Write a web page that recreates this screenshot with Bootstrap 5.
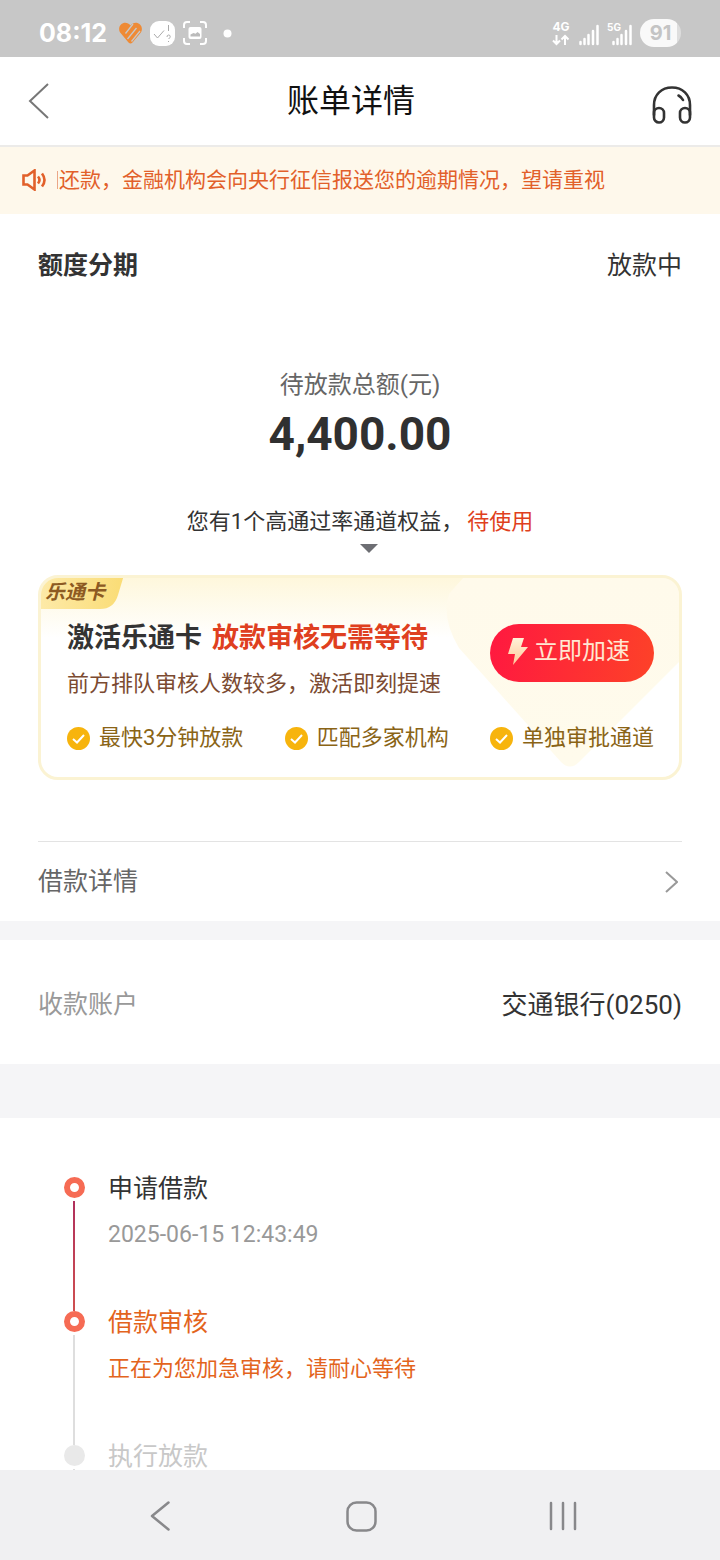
<!DOCTYPE html>
<html lang="zh-CN">
<head>
<meta charset="utf-8">
<meta name="viewport" content="width=device-width, initial-scale=1">
<title>账单详情</title>
<link href="https://cdn.jsdelivr.net/npm/bootstrap@5.3.0/dist/css/bootstrap.min.css" rel="stylesheet">
<style>
  body { font-family: Roboto, "Noto Sans CJK SC", sans-serif; color: #333; background: #fff; }
  svg { display: block; flex: none; }
  .gutter { padding-left: 38px; padding-right: 38px; }
  .status-bar { height: 57px; padding: 9px 39px 0; background: #c7c7c7; color: #fff; font-family: Inter, sans-serif; }
  .status-left { height: 48px; gap: 8px; }
  .status-right { height: 48px; gap: 8px; }
  .clock { font-size: 25px; font-weight: 700; line-height: 32px; margin-right: 4px; }
  .status-dot { margin-left: 8px; }
  .battery { width: 41px; height: 28px; border-radius: 14px; background: linear-gradient(90deg, #f9f9f9 91%, #dedede 91%); color: #c4c4c4; font-size: 20px; line-height: 28px; font-weight: 700; }
  .title-bar { height: 90px; padding: 0 28px; border-bottom: 2px solid #ecebe9; }
  .title-bar h1 { font-size: 32px; line-height: 40px; color: #111; }
  .notice { height: 67px; padding: 0 22px 2px; background: #fef8eb; color: #e2602a; font-size: 21px; gap: 10px; }
  .notice-text { border-left: 1px solid #eba787; line-height: 18px; padding-left: 1px; }
  .scroller { min-height: 0; scrollbar-width: none; }
  .t25 { font-size: 25px; line-height: 36px; }
  .t26 { font-size: 26px; line-height: 36px; }
  .t24 { font-size: 24px; line-height: 36px; }
  .t22 { font-size: 22px; line-height: 32px; }
  .quota { padding-top: 34px; }
  .quota h2 { font-weight: 700; }
  .total { margin-top: 83px; }
  .total-label { color: #666; }
  .amount { font-size: 46px; line-height: 56px; font-weight: 700; color: #303030; margin-top: 3px; }
  .perk { margin-top: 44px; color: #333; }
  .txt-red { color: #df3f20; }
  .caret { margin: 6px 0 0 18px; }
  .promo { margin-top: 22px; height: 205px; padding: 42px 25px 0 26px; border: 3px solid #fbf3d3; border-radius: 20px; background: linear-gradient(#fef7dc, #fff 60px); overflow: hidden; }
  .promo-tint { right: 0; top: 0; }
  .promo-tag { left: -3px; top: -3px; width: 87px; height: 34px; }
  .promo-tag span { position: relative; display: block; padding-left: 7px; font-size: 20px; line-height: 35px; font-weight: 700; font-style: italic; color: #8d5a22; }
  .promo h3 { font-size: 27px; line-height: 36px; font-weight: 700; margin: 0; gap: 10px; }
  .promo-sub { color: #7b4a31; margin-top: 12px; }
  .boost { width: 164px; height: 58px; margin-top: 4px; border: 0; border-radius: 29px; background: linear-gradient(100deg, #ff1840, #fd4228); color: #ffe7d2; font-size: 24px; line-height: 36px; gap: 6px; padding: 0 10px 4px 4px; }
  .feats { margin-top: 22px; color: #8a6416; }
  .feats li { gap: 9px; }
  .detail-row { margin-top: 61px; height: 80px; border-top: 1px solid #e3e3e3; color: #666; padding-right: 4px; }
  .band { background: #f5f5f7; }
  .band-s { height: 19px; }
  .band-l { height: 54px; }
  .account { height: 124px; padding-top: 5px; }
  .muted { color: #999; }
  .steps { padding: 52px 38px 0 63px; }
  .steps li { height: 134px; gap: 23px; }
  .step-text { padding-top: 1px; }
  .rail { width: 22px; padding-top: 7px; }
  .dot { width: 21px; height: 21px; border-radius: 50%; border: 6px solid #f66b54; background: #fff; flex: none; }
  .dot-off { border-color: #e9e9e9; background: #e9e9e9; }
  .wire { width: 2px; flex: 1; margin-top: 3px; margin-bottom: -7px; background: #dedede; }
  .wire-on { background: linear-gradient(#b0305c, #cf5050); }
  .step-note { margin-top: 12px; }
  .time { font-size: 23px; line-height: 32px; }
  .now { color: #e3641d; }
  .off { color: #c8c8c8; }
  .nav-sys { height: 90px; background: #f0f0f2; padding: 2px 142px 0; }
  .icon-btn { background: none; border: 0; padding: 0; }
</style>
</head>
<body>
<div class="d-flex flex-column vh-100 overflow-hidden">
  <div class="status-bar d-flex justify-content-between flex-shrink-0">
    <div class="status-left d-flex align-items-center">
      <span class="clock">08:12</span>
      <svg width="23" height="22" viewBox="0 0 23 22"><path d="M11.500 3.500C9 0 4.500 0 2 2.500-.500 5-.500 9 2 11.500l7.500 9q2 2 4 0l7.500-9c2.500-2.500 2.500-6.500 0-9C18.500 0 14 0 11.500 3.500z" fill="#ee8a35"/><path d="M13 2L5.500 11.500M16.500 6L7.500 17M20 9l-8.500 10.500" transform="translate(1 0)" stroke="#c7c7c7" stroke-width="1.300"/></svg>
      <svg width="25" height="25" viewBox="0 0 25 25"><rect width="25" height="25" rx="9" fill="#fff"/><path d="M4 13l3.500 4L14 9.500M18.500 4v6M17 16q0-2 1.600-2t1.600 1.600q0 1-1.600 2.400M18.500 20v1" fill="none" stroke="#aaa" stroke-width="1"/></svg>
      <svg width="24" height="24" viewBox="0 0 24 24"><path d="M1 7V4q0-3 3-3h3M17 1h3q3 0 3 3v3M23 17v3q0 3-3 3h-3M7 23H4q-3 0-3-3v-3" fill="none" stroke="#fff" stroke-width="2"/><rect x="5.500" y="6" width="13" height="12" rx="2" fill="#fff"/><path d="M7.500 15.500v-2l3-1.500 2 .800 2-1.800 2.500 2v2.500z" fill="#bbb"/></svg>
      <svg class="status-dot" width="9" height="9" viewBox="0 0 9 9"><circle cx="4.500" cy="4.500" r="4" fill="#fff"/></svg>
    </div>
    <div class="status-right d-flex align-items-center">
      <svg width="20" height="28" viewBox="0 0 20 28"><text x="10" y="12" text-anchor="middle" fill="#fff" font-size="12" font-weight="700">4G</text><path d="M5.500 16v9M2 21.500L5.500 25 9 21.500M14 26v-9M10.500 20.500L14 17l3.500 3.500" stroke="#fff" stroke-width="2" fill="none"/></svg>
      <svg width="20" height="28" viewBox="0 0 20 28"><path d="M1.500 23v2M5.500 20v5M9.500 16v9M14 12v13M18.500 7v18" stroke="#fff" stroke-width="2.500" stroke-linecap="round"/></svg>
      <svg width="25" height="28" viewBox="0 0 25 28"><text x="0" y="12" fill="#fff" font-size="10" font-weight="700">5G</text><path d="M6.500 23v2M10.500 20v5M14.500 16v9M19 12v13M23.500 7v18" stroke="#fff" stroke-width="2.500" stroke-linecap="round"/></svg>
      <span class="battery text-center">91</span>
    </div>
  </div>

  <header class="title-bar d-flex align-items-center justify-content-between flex-shrink-0">
    <button class="icon-btn" aria-label="返回"><svg width="22" height="36" viewBox="0 0 22 36"><path d="M20 1L2 18l18 17" fill="none" stroke="#777" stroke-width="2"/></svg></button>
    <h1 class="m-0 fw-normal">账单详情</h1>
    <button class="icon-btn pt-2" aria-label="客服"><svg width="40" height="38" viewBox="0 0 40 38"><g fill="none" stroke="#333" stroke-width="2.600" stroke-linecap="round"><path d="M2 29V19C2 8.500 9.500 1.500 20 1.500S38 8.500 38 19v10"/><rect x="2" y="22" width="10" height="14.500" rx="5"/><rect x="28" y="22" width="10" height="14.500" rx="5"/><path d="M26.500 9.500q3 1.500 4.500 4.500"/></g></svg></button>
  </header>

  <div class="notice d-flex align-items-center flex-shrink-0 text-nowrap">
    <svg width="25" height="22" viewBox="0 0 25 22"><g fill="none" stroke="#e2602a" stroke-width="2.600"><path d="M1.500 6.500h4L12.500 1.500v19L5.500 15.500h-4z"/><path d="M16 7.500q3 3.500 0 7M20 4.500q5 6.500 0 13"/></g></svg>
    <span class="notice-text">还款，金融机构会向央行征信报送您的逾期情况，望请重视</span>
  </div>

  <main class="scroller flex-grow-1 overflow-auto">
    <section class="quota gutter">
      <div class="d-flex justify-content-between">
        <h2 class="t25 m-0">额度分期</h2>
        <span class="t25">放款中</span>
      </div>
      <div class="total text-center">
        <div class="t24 total-label">待放款总额(元)</div>
        <div class="amount">4,400.00</div>
      </div>
      <div class="perk t22 d-flex justify-content-center">
        <span>您有1个高通过率通道权益，</span><a class="txt-red text-decoration-none ms-1" href="#perk">待使用</a>
      </div>
      <div class="d-flex justify-content-center"><svg class="caret" width="18" height="9" viewBox="0 0 18 9"><path d="M0 0h18L9 9z" fill="#6d6e73"/></svg></div>

      <div class="promo position-relative" id="perk">
        <svg class="promo-tint position-absolute" width="244" height="199" viewBox="0 0 244 199"><defs><linearGradient id="tint" x1="0" y1="0" x2="0" y2="1"><stop offset="0" stop-color="#fffaeb"/><stop offset="1" stop-color="#fffbec"/></linearGradient></defs><path d="M28 0L14 16Q6 40 24 70L126 184q9 9 18 0L244 84V0z" fill="url(#tint)"/></svg>
        <div class="promo-tag position-absolute"><svg class="position-absolute" width="87" height="34" viewBox="0 0 87 34"><defs><linearGradient id="tag" x1="0" y1="0" x2="1" y2="0"><stop offset="0" stop-color="#fdeaa9"/><stop offset="1" stop-color="#fadc75"/></linearGradient></defs><path d="M0 34V20Q0 0 20 0H86L80 20Q76 34 62 34z" fill="url(#tag)"/></svg><span>乐通卡</span></div>
        <div class="position-relative">
          <div class="d-flex justify-content-between">
            <div>
              <h3 class="d-flex"><span>激活乐通卡</span><span class="txt-red">放款审核无需等待</span></h3>
              <p class="promo-sub t22 mb-0">前方排队审核人数较多，激活即刻提速</p>
            </div>
            <button class="boost d-flex align-items-center justify-content-center"><svg width="20" height="27" viewBox="0 0 20 27"><defs><linearGradient id="bolt" x1="0" y1="0" x2="0" y2="1"><stop offset="0" stop-color="#fff3d8"/><stop offset="1" stop-color="#ffc79a"/></linearGradient></defs><path d="M5 0h11l-3 9h7L5 27l2-11H0z" fill="url(#bolt)"/></svg>立即加速</button>
          </div>
          <ul class="feats t22 list-unstyled d-flex justify-content-between mb-0">
            <li class="d-flex align-items-center"><svg width="23" height="23" viewBox="0 0 23 23"><circle cx="11.500" cy="11.500" r="11.500" fill="#f7b40d"/><path d="M6 12l4 3.500L17 8" fill="none" stroke="#fff" stroke-width="2"/></svg>最快3分钟放款</li>
            <li class="d-flex align-items-center"><svg width="23" height="23" viewBox="0 0 23 23"><circle cx="11.500" cy="11.500" r="11.500" fill="#f7b40d"/><path d="M6 12l4 3.500L17 8" fill="none" stroke="#fff" stroke-width="2"/></svg>匹配多家机构</li>
            <li class="d-flex align-items-center"><svg width="23" height="23" viewBox="0 0 23 23"><circle cx="11.500" cy="11.500" r="11.500" fill="#f7b40d"/><path d="M6 12l4 3.500L17 8" fill="none" stroke="#fff" stroke-width="2"/></svg>单独审批通道</li>
          </ul>
        </div>
      </div>

      <a class="detail-row t25 d-flex justify-content-between align-items-center text-decoration-none" href="#steps">借款详情<svg width="13" height="22" viewBox="0 0 13 22"><path d="M1 1l11 10L1 21" fill="none" stroke="#999" stroke-width="2"/></svg></a>
    </section>
    <div class="band band-s"></div>
    <section class="account gutter d-flex justify-content-between align-items-center">
      <span class="t25 muted">收款账户</span><span class="t26">交通银行(0250)</span>
    </section>
    <div class="band band-l"></div>
    <ol class="steps list-unstyled mb-0" id="steps">
      <li class="d-flex">
        <div class="rail d-flex flex-column align-items-center flex-shrink-0"><span class="dot"></span><span class="wire wire-on"></span></div>
        <div class="step-text"><div class="t25">申请借款</div><div class="time step-note muted">2025-06-15 12:43:49</div></div>
      </li>
      <li class="d-flex now">
        <div class="rail d-flex flex-column align-items-center flex-shrink-0"><span class="dot"></span><span class="wire"></span></div>
        <div class="step-text"><div class="t25">借款审核</div><div class="t22 step-note">正在为您加急审核，请耐心等待</div></div>
      </li>
      <li class="d-flex off">
        <div class="rail d-flex flex-column align-items-center flex-shrink-0"><span class="dot dot-off"></span><span class="wire"></span></div>
        <div class="step-text t25">执行放款</div>
      </li>
    </ol>
  </main>

  <nav class="nav-sys d-flex align-items-center justify-content-between flex-shrink-0" aria-label="系统导航">
    <button class="icon-btn ps-2 pe-1" aria-label="后退"><svg width="20" height="30" viewBox="0 0 20 30"><path d="M18.500 1.500L2 15l16.500 13.500" fill="none" stroke="#88888b" stroke-width="2.500" stroke-linecap="round" stroke-linejoin="round"/></svg></button>
    <button class="icon-btn" aria-label="主页"><svg width="31" height="31" viewBox="0 0 31 31"><rect x="1.500" y="1.500" width="28" height="28" rx="9" fill="none" stroke="#88888b" stroke-width="2.500"/></svg></button>
    <button class="icon-btn" aria-label="最近任务"><svg width="30" height="30" viewBox="0 0 30 30"><path d="M3 2v26M15 2v26M27 2v26" stroke="#88888b" stroke-width="2.500" stroke-linecap="round"/></svg></button>
  </nav>
</div>
<script src="https://cdn.jsdelivr.net/npm/bootstrap@5.3.0/dist/js/bootstrap.bundle.min.js"></script>
</body>
</html>
